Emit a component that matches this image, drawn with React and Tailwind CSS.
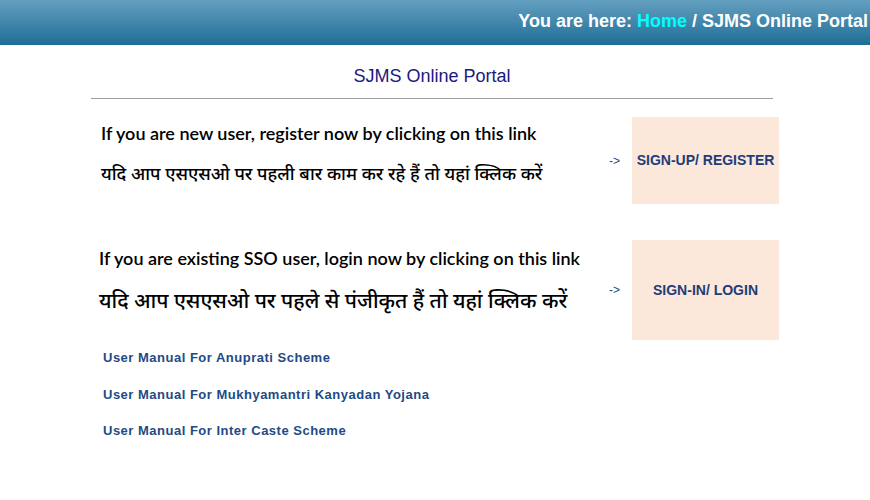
import React from 'react';

const manuals = [
  'User Manual For Anuprati Scheme',
  'User Manual For Mukhyamantri Kanyadan Yojana',
  'User Manual For Inter Caste Scheme',
];

const ActionBox = ({ label, height }) => (
  <div className="flex items-center">
    <span className="w-[33px] pl-[10px] text-[12px] text-[#1d4f7a] font-['Liberation_Sans',Arial,sans-serif]">-&gt;</span>
    <a
      href="#"
      className={`${height} w-[147px] bg-[#fce8da] flex items-center justify-center text-[14px] font-bold text-[#1d3d78] font-['Liberation_Sans',Arial,sans-serif]`}
    >
      {label}
    </a>
  </div>
);

const App = () => {
  return (
    <div className="w-[870px] h-[500px] bg-white overflow-hidden">
      {/* Breadcrumb bar */}
      <div className="h-[45px] bg-gradient-to-b from-[#639fbf] to-[#1b6e97] flex items-center justify-end pr-[2px] pb-[2px]">
        <p className="text-[18px] font-bold text-white font-['Liberation_Sans',Arial,sans-serif]">
          You are here: <a href="#" className="text-[#00ffff]">Home</a> / SJMS Online Portal
        </p>
      </div>

      <div className="ml-[91px] w-[688px]">
        {/* Title */}
        <div className="w-[682px] border-b border-[#a0a0a0] pt-[20px] pb-[10px]">
          <h1 className="text-center text-[18px] leading-[23px] text-[#1a1a80] font-['Liberation_Sans',Arial,sans-serif]">
            SJMS Online Portal
          </h1>
        </div>

        {/* New user */}
        <div className="flex mt-[18px]">
          <div className="w-[508px] pl-[10px] pt-[4px]">
            <p className="text-[18px] leading-[24px] text-black font-['Lato',sans-serif] font-semibold">
              If you are new user, register now by clicking on this link
            </p>
            <p className="mt-[13px] text-[18px] leading-[30px] text-black font-medium font-['Noto_Sans','Noto_Sans_Devanagari','Lohit_Devanagari',serif]">
              यदि आप एसएसओ पर पहली बार काम कर रहे हैं तो यहां क्लिक करें
            </p>
          </div>
          <ActionBox label="SIGN-UP/ REGISTER" height="h-[87px]" />
        </div>

        {/* Existing user */}
        <div className="flex mt-[36px]">
          <div className="w-[508px] pl-[8px] pt-[6px]">
            <p className="text-[18px] leading-[24px] text-black font-['Lato',sans-serif] font-semibold whitespace-nowrap">
              If you are existing SSO user, login now by clicking on this link
            </p>
            <p className="mt-[13px] text-[21px] leading-[34px] text-black font-medium font-['Noto_Sans','Noto_Sans_Devanagari','Lohit_Devanagari',serif] whitespace-nowrap">
              यदि आप एसएसओ पर पहले से पंजीकृत हैं तो यहां क्लिक करें
            </p>
          </div>
          <ActionBox label="SIGN-IN/ LOGIN" height="h-[100px]" />
        </div>

        {/* Manuals */}
        <ul className="mt-[8px] pl-[12px] flex flex-col gap-[16.5px]">
          {manuals.map((m) => (
            <li key={m} className="h-[20px] flex items-center">
              <a href="#" className="text-[13px] leading-[20px] tracking-[0.5px] font-bold text-[#1e4a85] font-['Liberation_Sans',Arial,sans-serif]">
                {m}
              </a>
            </li>
          ))}
        </ul>
      </div>
    </div>
  );
};

export default App;
